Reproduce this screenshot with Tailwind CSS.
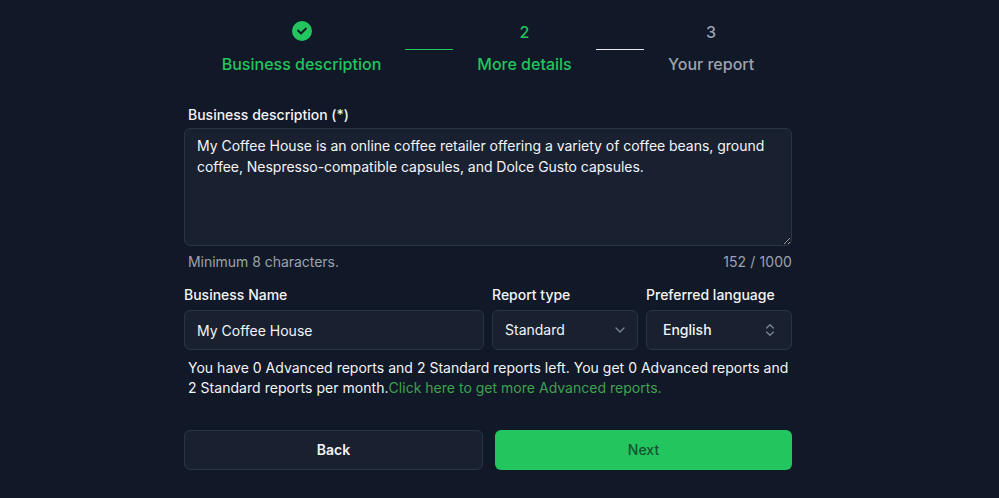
<!DOCTYPE html>
<html><head><script src="https://cdn.jsdelivr.net/npm/@tailwindcss/browser@4"></script></head>
<body class="bg-[#111827] font-['Inter',sans-serif] h-[498px] overflow-hidden text-sm text-[#f3f4f6]">
<div class="flex items-start h-[100px] pl-[222px] pt-[21px]">
  <div class="flex flex-col items-center w-[159px]">
    <svg class="w-5 h-5 text-[#22c55e]" viewBox="0 0 20 20" fill="currentColor"><path fill-rule="evenodd" clip-rule="evenodd" d="M10 20a10 10 0 1 0 0-20 10 10 0 0 0 0 20Zm4.7-11.8a1 1 0 0 0-1.4-1.4L9 11.1 6.7 8.8a1 1 0 0 0-1.4 1.4l3 3a1 1 0 0 0 1.4 0l5-5Z"/></svg>
    <span class="mt-[11px] text-base leading-[24px] font-medium text-[#22c55e] whitespace-nowrap">Business description</span>
  </div>
  <div class="w-12 h-px bg-[#22c55e] mx-6 mt-[28px]"></div>
  <div class="flex flex-col items-center w-[95px]">
    <span class="h-5 text-base leading-[22px] font-medium text-[#22c55e]">2</span>
    <span class="mt-[11px] text-base leading-[24px] font-medium text-[#22c55e] whitespace-nowrap">More details</span>
  </div>
  <div class="w-12 h-px bg-[#e5e7eb] mx-6 mt-[28px]"></div>
  <div class="flex flex-col items-center">
    <span class="h-5 text-base leading-[22px] font-medium text-[#9ca3af]">3</span>
    <span class="mt-[11px] text-base leading-[24px] font-medium text-[#9ca3af] whitespace-nowrap">Your report</span>
  </div>
</div>
<main class="w-[608px] ml-[184px] flex flex-col">
  <label class="pl-1 h-5 leading-5 mt-[5px] font-medium">Business description (*)</label>
  <textarea class="mt-[3px] block w-full h-[118px] rounded-md border border-[#2b3446] bg-[#192130] px-3 pt-[6px] pb-2 leading-[21px] tracking-[-0.03px] outline-none text-[#f3f4f6]">My Coffee House is an online coffee retailer offering a variety of coffee beans, ground coffee, Nespresso-compatible capsules, and Dolce Gusto capsules.</textarea>
  <div class="flex justify-between pl-1 mt-[6px] h-5 leading-5 text-[#9ca3af]">
    <span class="tracking-[-0.03px]">Minimum 8 characters.</span><span class="tracking-[0.1px]">152 / 1000</span>
  </div>
  <div class="flex gap-2 mt-[13px]">
    <div class="w-[300px]">
      <div class="h-5 leading-5 font-medium">Business Name</div>
      <div class="mt-[5px] h-10 rounded-md border border-[#2b3446] bg-[#192130] px-3 pt-px flex items-center">My Coffee House</div>
    </div>
    <div class="w-[146px]">
      <div class="h-5 leading-5 font-medium">Report type</div>
      <div class="mt-[5px] h-10 rounded-md border border-[#2b3446] bg-[#192130] pl-3 pr-[9px] flex items-center justify-between">
        <span>Standard</span>
        <svg class="w-4 h-4 text-[#7b8494]" viewBox="0 0 24 24" fill="none" stroke="currentColor" stroke-width="2" stroke-linecap="round" stroke-linejoin="round"><path d="m6 9 6 6 6-6"/></svg>
      </div>
    </div>
    <div class="w-[146px]">
      <div class="h-5 leading-5 font-medium">Preferred language</div>
      <div class="mt-[5px] h-10 rounded-md border border-[#2b3446] bg-[#192130] pl-4 pr-[13px] flex items-center justify-between">
        <span class="font-medium">English</span>
        <svg class="w-4 h-4 text-[#7b8494]" viewBox="0 0 24 24" fill="none" stroke="currentColor" stroke-width="2" stroke-linecap="round" stroke-linejoin="round"><path d="m7 15 5 5 5-5"/><path d="m7 9 5-5 5 5"/></svg>
      </div>
    </div>
  </div>
  <p class="pl-1 mt-2 leading-5 tracking-[0.015px]">You have 0 Advanced reports and 2 Standard reports left. You get 0 Advanced reports and <span class="tracking-[0.04px]">2 Standard reports per month.</span><a class="text-[#3fa24f]">Click here to get more Advanced reports.</a></p>
  <div class="flex gap-3 mt-[32px]">
    <button class="w-[299px] h-10 rounded-md border border-[#2b3446] bg-[#192130] font-semibold">Back</button>
    <button class="w-[297px] h-10 rounded-md bg-[#22c55e] font-medium text-[#14532d]">Next</button>
  </div>
</main>
</body></html>
